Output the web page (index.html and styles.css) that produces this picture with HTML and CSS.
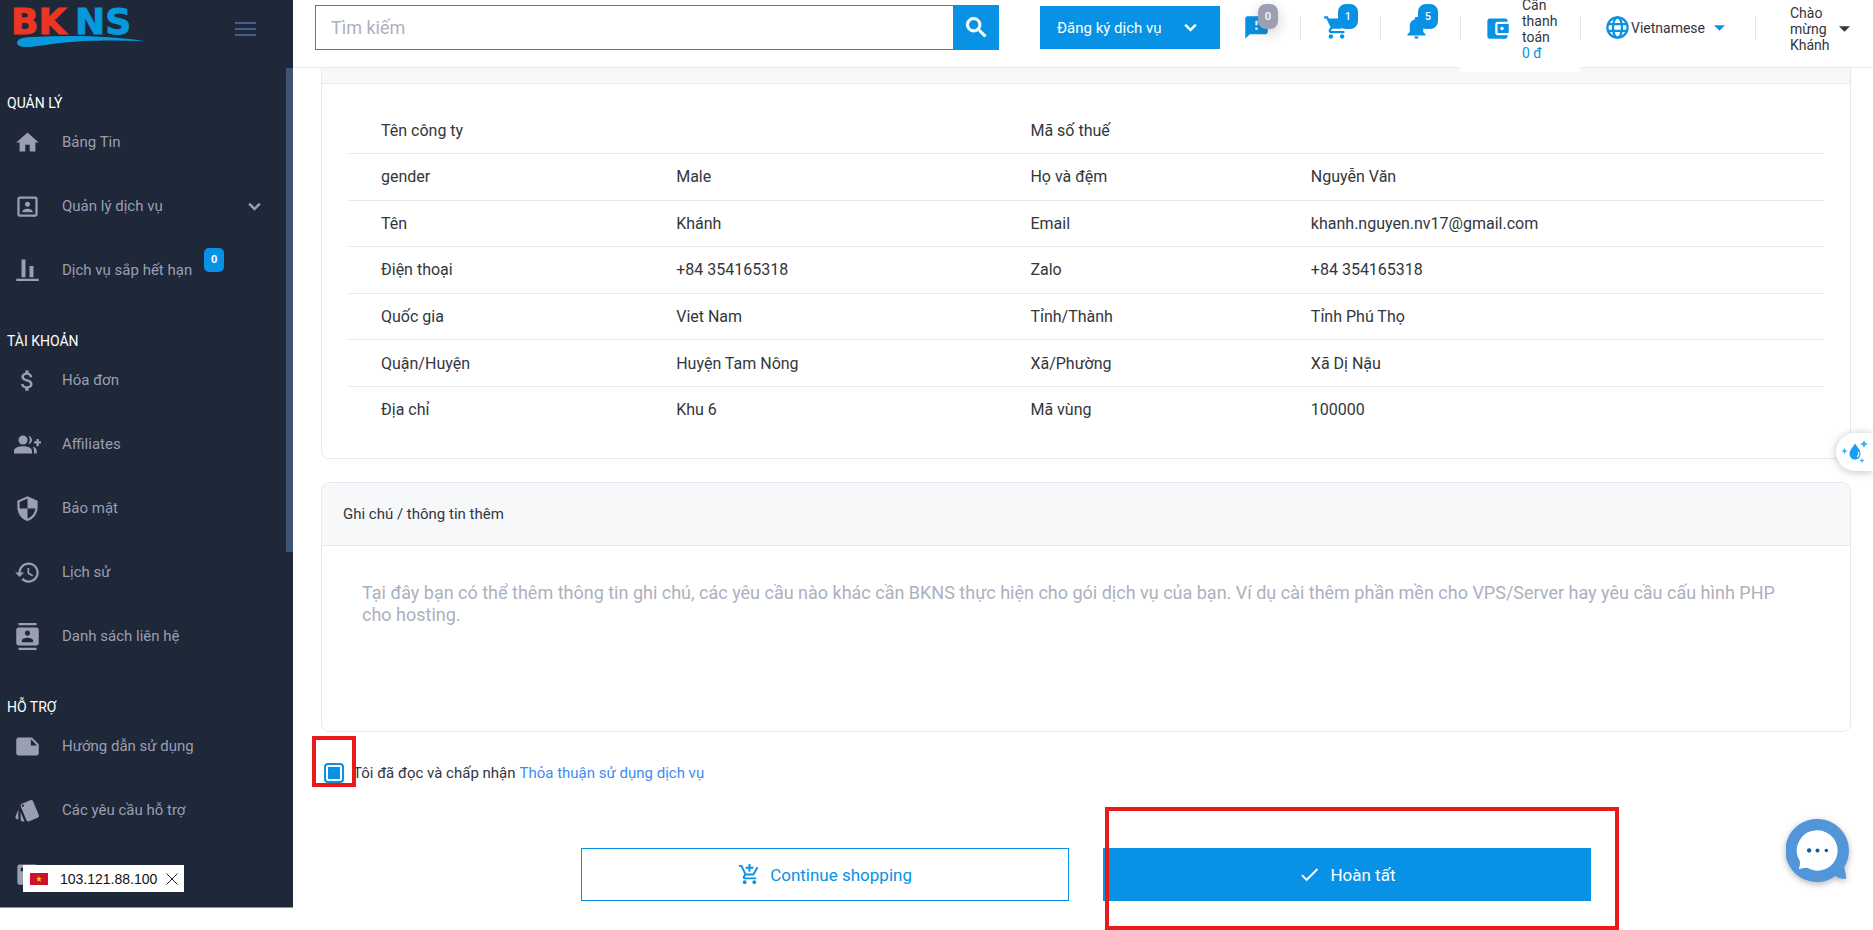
FILE: index.html
```html
<!DOCTYPE html>
<html lang="vi">
<head>
<meta charset="utf-8">
<title>BKNS</title>
<link rel="stylesheet" href="styles.css">
</head>
<body>
<svg class="sprite" aria-hidden="true">
  <symbol id="home" viewBox="0 0 24 24"><path d="M10 20v-6h4v6h5v-8h3L12 3 2 12h3v8z"/></symbol>
  <symbol id="portrait" viewBox="0 0 24 24"><path d="M12 12.25c1.24 0 2.25-1.01 2.25-2.25S13.24 7.75 12 7.75 9.75 8.76 9.75 10s1.01 2.25 2.25 2.25zm4.5 4c0-1.5-3-2.25-4.5-2.25s-4.5.75-4.5 2.25V17h9v-.75zM19 3H5c-1.1 0-2 .9-2 2v14c0 1.1.9 2 2 2h14c1.1 0 2-.9 2-2V5c0-1.1-.9-2-2-2zm0 16H5V5h14v14z"/></symbol>
  <symbol id="bars" viewBox="0 0 24 24"><path d="M2 19.400h20v2H2zM6.700 2.300h3.500V18H6.700zM13.800 8h3.500v10h-3.500z"/></symbol>
  <symbol id="money" viewBox="0 0 24 24"><path d="M11.8 10.9c-2.270-.59-3-1.200-3-2.150 0-1.090 1.010-1.850 2.700-1.850 1.780 0 2.440.85 2.500 2.100h2.210c-.07-1.720-1.120-3.300-3.210-3.810V3h-3v2.160c-1.940.42-3.500 1.680-3.500 3.610 0 2.310 1.910 3.460 4.700 4.130 2.500.6 3 1.480 3 2.410 0 .69-.49 1.790-2.700 1.790-2.060 0-2.870-.92-2.980-2.100h-2.200c.12 2.190 1.760 3.420 3.680 3.830V21h3v-2.150c1.950-.37 3.500-1.500 3.500-3.550 0-2.840-2.430-3.810-4.700-4.400z"/></symbol>
  <symbol id="people" viewBox="0 0 24 24"><circle cx="8" cy="8" r="4"/><path d="M0 20v-2.500c0-2.800 4.500-4 8-4s8 1.200 8 4V20zM12.700 4.200c1.600.2 3.300 1.700 3.300 3.800s-1.700 3.600-3.300 3.800c.8-1 1.300-2.300 1.300-3.800s-.5-2.800-1.300-3.800zM16.500 13.800c2 .7 3.700 1.900 3.700 3.700V20h-2.400v-2.500c0-1.500-.5-2.700-1.300-3.700zM20 7h2v2.200h2.300v2H22v2.300h-2v-2.300h-2.200v-2H20z"/></symbol>
  <symbol id="shield" viewBox="0 0 24 24"><path d="M12 1L3 5v6c0 5.550 3.840 10.740 9 12 5.160-1.260 9-6.450 9-12V5l-9-4zm0 10.990h7c-.53 4.120-3.280 7.790-7 8.940V12H5V6.300l7-3.110v8.800z"/></symbol>
  <symbol id="history" viewBox="0 0 24 24"><path d="M13 3c-4.970 0-9 4.030-9 9H1l3.890 3.890.07.14L9 12H6c0-3.870 3.130-7 7-7s7 3.130 7 7-3.130 7-7 7c-1.930 0-3.680-.79-4.940-2.060l-1.420 1.420C8.270 19.990 10.510 21 13 21c4.970 0 9-4.030 9-9s-4.030-9-9-9zm-1 5v5l4.280 2.540.72-1.210-3.500-2.080V8H12z"/></symbol>
  <symbol id="contacts" viewBox="0 0 24 24"><path d="M20 0H4v2h16V0zM4 24h16v-2H4v2zM20 4H4c-1.100 0-2 .9-2 2v12c0 1.100.9 2 2 2h16c1.100 0 2-.9 2-2V6c0-1.100-.9-2-2-2zm-8 2.750c1.240 0 2.250 1.010 2.250 2.250s-1.010 2.250-2.250 2.250S9.750 10.240 9.750 9 10.760 6.750 12 6.750zM17 17H7v-1.500c0-1.670 3.330-2.500 5-2.500s5 .83 5 2.500V17z"/></symbol>
  <symbol id="note" viewBox="0 0 24 24"><path d="M22 10l-6-6H4c-1.100 0-2 .9-2 2v12.010c0 1.100.9 1.990 2 1.990l16-.01c1.100 0 2-.89 2-1.990v-8zm-7-4.500l5.500 5.500H15V5.500z"/></symbol>
  <symbol id="tags" viewBox="0 0 24 24"><path d="M2.530 19.650l1.340.56v-9.030l-2.430 5.860c-.41 1.020.08 2.190 1.090 2.610zm19.500-3.700L17.070 3.980c-.31-.75-1.040-1.210-1.810-1.230-.26 0-.53.04-.79.15L7.100 5.950c-.75.31-1.210 1.030-1.230 1.800-.01.27.04.54.15.8l4.960 11.970c.31.76 1.050 1.220 1.830 1.230.26 0 .52-.05.77-.15l7.360-3.050c1.020-.42 1.510-1.590 1.090-2.600zM7.880 8.750c-.55 0-1-.45-1-1s.45-1 1-1 1 .45 1 1-.45 1-1 1zm-2 11c0 1.100.9 2 2 2h1.450l-3.450-8.340v6.340z"/></symbol>
  <symbol id="book" viewBox="0 0 24 24"><path d="M5 3h14a2 2 0 0 1 2 2v14a2 2 0 0 1-2 2H5a2 2 0 0 1-2-2V5a2 2 0 0 1 2-2zm1 3v3h12V6z"/></symbol>
  <symbol id="search" viewBox="0 0 24 24"><path stroke="currentColor" stroke-width=".8" d="M15.500 14h-.79l-.28-.27C15.410 12.590 16 11.110 16 9.500 16 5.910 13.090 3 9.500 3S3 5.910 3 9.500 5.910 16 9.500 16c1.610 0 3.090-.59 4.230-1.570l.27.28v.79l5 4.990L20.490 19l-4.990-5zm-6 0C7.010 14 5 11.990 5 9.500S7.010 5 9.500 5 14 7.010 14 9.500 11.990 14 9.500 14z"/></symbol>
  <symbol id="feedback" viewBox="0 0 24 24"><path d="M20 2H4c-1.100 0-1.990.9-1.990 2L2 22l4-4h14c1.100 0 2-.9 2-2V4c0-1.100-.9-2-2-2zm-7 12h-2v-2h2v2zm0-4h-2V6h2v4z"/></symbol>
  <symbol id="cart" viewBox="0 0 24 24"><path d="M7 18c-1.100 0-1.990.9-1.990 2S5.900 22 7 22s2-.9 2-2-.9-2-2-2zM1 2v2h2l3.600 7.590-1.350 2.450c-.16.28-.25.61-.25.96 0 1.100.9 2 2 2h12v-2H7.420c-.14 0-.25-.11-.25-.25l.03-.12.9-1.630h7.450c.75 0 1.410-.41 1.750-1.030l3.580-6.490A1.003 1.003 0 0 0 20 4H5.210l-.94-2H1zm16 16c-1.100 0-1.990.9-1.990 2s.89 2 1.990 2 2-.9 2-2-.9-2-2-2z"/></symbol>
  <symbol id="bell" viewBox="0 0 24 24"><path d="M12 22c1.100 0 2-.9 2-2h-4c0 1.100.89 2 2 2zm6-6v-5c0-3.070-1.640-5.640-4.500-6.320V4c0-.83-.67-1.500-1.500-1.500s-1.500.67-1.500 1.500v.68C7.630 5.360 6 7.920 6 11v5l-2 2v1h16v-1l-2-2z"/></symbol>
  <symbol id="wallet" viewBox="0 0 24 24"><path d="M21 18v1c0 1.100-.9 2-2 2H5c-1.110 0-2-.9-2-2V5c0-1.100.89-2 2-2h14c1.100 0 2 .9 2 2v1h-9c-1.110 0-2 .9-2 2v8c0 1.100.89 2 2 2h9zm-9-2h10V8H12v8zm4-2.500c-.83 0-1.500-.67-1.500-1.500s.67-1.500 1.500-1.500 1.500.67 1.500 1.500-.67 1.500-1.500 1.500z"/></symbol>
  <symbol id="globe" viewBox="0 0 24 24"><g fill="none" stroke="currentColor" stroke-width="2"><circle cx="12" cy="12" r="9"/><ellipse cx="12" cy="12" rx="4" ry="9"/><path d="M4 9h16M4 15h16"/></g></symbol>
  <symbol id="cartadd" viewBox="0 0 24 24"><path d="M11 9h2V6h3V4h-3V1h-2v3H8v2h3v3zm-4 9c-1.100 0-1.990.9-1.990 2S5.900 22 7 22s2-.9 2-2-.9-2-2-2zm10 0c-1.100 0-1.990.9-1.990 2s.89 2 1.990 2 2-.9 2-2-.9-2-2-2zm-9.830-3.250l.03-.12.9-1.630h7.450c.75 0 1.410-.41 1.750-1.030l3.860-7.010L19.420 4h-.01l-1.100 2-2.760 5H8.530l-.13-.27L6.160 6l-.95-2-.94-2H1v2h2l3.600 7.590-1.350 2.450c-.16.28-.25.61-.25.96 0 1.100.9 2 2 2h12v-2H7.420c-.13 0-.25-.11-.25-.25z"/></symbol>
  <symbol id="check" viewBox="0 0 24 24"><path d="M9 16.170L4.830 12l-1.420 1.410L9 19 21 7l-1.410-1.410z"/></symbol>
  <symbol id="down" viewBox="0 0 24 24"><path stroke="currentColor" stroke-width=".8" d="M16.590 8.590L12 13.170 7.410 8.590 6 10l6 6 6-6z"/></symbol>
  <symbol id="caret" viewBox="0 0 12 6"><path d="M0 0h12L6 6z"/></symbol>
</svg>

<div class="app">
  <aside class="sidebar">
    <div class="brand">
      <svg class="logo" viewBox="0 0 134 40" role="img" aria-label="BKNS">
        <text class="logo-text logo-red" x="-2" y="27">BK</text>
        <text class="logo-text logo-blue" x="62" y="27">NS</text>
        <path class="logo-blue" d="M4 36c0-4 6-6 16-6 40-2 80-1 111 4-30-1-60-1-84 2-16 2-26 4-34 4-6 0-9-2-9-4z"/>
      </svg>
      <button class="menu-toggle" aria-label="Menu"><span></span><span></span><span></span></button>
    </div>
    <nav class="nav">
      <h2 class="nav-title">QUẢN LÝ</h2>
      <a class="nav-item" href="#"><svg class="icon"><use href="#home"/></svg><span>Bảng Tin</span></a>
      <a class="nav-item" href="#"><svg class="icon"><use href="#portrait"/></svg><span>Quản lý dịch vụ</span><svg class="icon-small nav-arrow"><use href="#down"/></svg></a>
      <a class="nav-item" href="#"><svg class="icon"><use href="#bars"/></svg><span>Dịch vụ sắp hết hạn</span><span class="nav-badge">0</span></a>
      <h2 class="nav-title">TÀI KHOẢN</h2>
      <a class="nav-item" href="#"><svg class="icon"><use href="#money"/></svg><span>Hóa đơn</span></a>
      <a class="nav-item" href="#"><svg class="icon"><use href="#people"/></svg><span>Affiliates</span></a>
      <a class="nav-item" href="#"><svg class="icon"><use href="#shield"/></svg><span>Bảo mật</span></a>
      <a class="nav-item" href="#"><svg class="icon"><use href="#history"/></svg><span>Lịch sử</span></a>
      <a class="nav-item" href="#"><svg class="icon"><use href="#contacts"/></svg><span>Danh sách liên hệ</span></a>
      <h2 class="nav-title">HỖ TRỢ</h2>
      <a class="nav-item" href="#"><svg class="icon"><use href="#note"/></svg><span>Hướng dẫn sử dụng</span></a>
      <a class="nav-item" href="#"><svg class="icon"><use href="#tags"/></svg><span>Các yêu cầu hỗ trợ</span></a>
      <a class="nav-item" href="#" aria-label="Thư viện"><svg class="icon"><use href="#book"/></svg></a>
    </nav>
    <div class="scroll-thumb"></div>
    <div class="ip-box">
      <svg class="flag" viewBox="0 0 18 12"><path fill="#d0112b" d="M0 0h18v12H0z"/><path fill="#ffde00" d="M9 3l.8 2.200h2.300l-1.900 1.400.7 2.200L9 7.400 7.100 8.800l.7-2.200-1.900-1.400h2.300z"/></svg>
      <span>103.121.88.100</span>
      <button class="ip-close" aria-label="Đóng"><svg viewBox="0 0 12 12"><path d="M.5.5l11 11M11.500.5l-11 11" stroke="#222" fill="none"/></svg></button>
    </div>
  </aside>

  <div class="page">
    <header class="topbar">
      <form class="search">
        <input class="search-input" type="text" placeholder="Tìm kiếm" aria-label="Tìm kiếm">
        <button class="search-button" type="button" aria-label="Tìm"><svg class="icon"><use href="#search"/></svg></button>
      </form>
      <button class="register">Đăng ký dịch vụ <svg class="icon-small"><use href="#down"/></svg></button>
      <div class="tools">
        <a class="tool" href="#" aria-label="Phản hồi"><svg class="icon"><use href="#feedback"/></svg><span class="badge badge-grey">0</span></a>
        <a class="tool" href="#" aria-label="Giỏ hàng"><svg class="icon"><use href="#cart"/></svg><span class="badge">1</span></a>
        <a class="tool" href="#" aria-label="Thông báo"><svg class="icon"><use href="#bell"/></svg><span class="badge">5</span></a>
        <a class="tool wallet" href="#"><svg class="icon"><use href="#wallet"/></svg><span class="wallet-text">Cần thanh toán <span class="amount">0 đ</span></span></a>
        <button class="tool language"><svg class="icon"><use href="#globe"/></svg>Vietnamese<svg class="caret caret-blue"><use href="#caret"/></svg></button>
        <button class="tool user"><span class="user-text">Chào mừng Khánh</span><svg class="caret"><use href="#caret"/></svg></button>
      </div>
    </header>

    <main class="content">
      <section class="card card-info">
        <div class="card-strip"></div>
        <div class="info-body">
          <table class="info">
            <colgroup><col class="col-a"><col class="col-b"><col class="col-c"><col class="col-d"></colgroup>
            <tbody>
            <tr><td>Tên công ty</td><td></td><td>Mã số thuế</td><td></td></tr>
            <tr><td>gender</td><td>Male</td><td>Họ và đệm</td><td>Nguyễn Văn</td></tr>
            <tr><td>Tên</td><td>Khánh</td><td>Email</td><td>khanh.nguyen.nv17@gmail.com</td></tr>
            <tr><td>Điện thoại</td><td>+84 354165318</td><td>Zalo</td><td>+84 354165318</td></tr>
            <tr><td>Quốc gia</td><td>Viet Nam</td><td>Tỉnh/Thành</td><td>Tỉnh Phú Thọ</td></tr>
            <tr><td>Quận/Huyện</td><td>Huyện Tam Nông</td><td>Xã/Phường</td><td>Xã Dị Nậu</td></tr>
            <tr><td>Địa chỉ</td><td>Khu 6</td><td>Mã vùng</td><td>100000</td></tr>
            </tbody>
          </table>
        </div>
      </section>

      <section class="card">
        <label class="card-title" for="note-text">Ghi chú / thông tin thêm</label>
        <textarea class="note-input" id="note-text" placeholder="Tại đây bạn có thể thêm thông tin ghi chú, các yêu cầu nào khác cần BKNS thực hiện cho gói dịch vụ của bạn. Ví dụ cài thêm phần mền cho VPS/Server hay yêu cầu cấu hình PHP cho hosting."></textarea>
      </section>

      <div class="terms">
        <input class="terms-check" type="checkbox" id="accept" checked>
        <label for="accept">Tôi đã đọc và chấp nhận</label>
        <a class="terms-link" href="#">Thỏa thuận sử dụng dịch vụ</a>
        <span class="mark mark-check"></span>
      </div>

      <div class="actions">
        <button class="action action-line"><svg class="icon-small"><use href="#cartadd"/></svg>Continue shopping</button>
        <div class="action-wrap">
          <button class="action action-fill"><svg class="icon-small"><use href="#check"/></svg>Hoàn tất</button>
          <span class="mark mark-action"></span>
        </div>
      </div>
    </main>
  </div>
</div>

<button class="assistant" aria-label="Trợ lý">
  <svg viewBox="0 0 28 24"><path fill="#16a0f5" d="M14 3.500c2.500 3.700 5.500 6.500 5.500 10.300a5.500 6 0 0 1-11 0C8.500 10 11.800 7.500 14 3.500z"/><path fill="none" stroke="#fff" stroke-width="1.300" stroke-linecap="round" d="M17.500 12.500c.5 1.800 0 3.200-1 4"/><path fill="#32b1f5" d="M3.500 8l.9 2.100 2.100.9-2.100.9-.9 2.100-.9-2.100-2.100-.9 2.100-.9zM23 0l1.200 2.800L27 4l-2.800 1.200L23 8l-1.200-2.800L19 4l2.800-1.200zM21 18l.7 1.800 1.800.7-1.800.7L21 23l-.7-1.800-1.800-.7 1.800-.7z"/></svg>
</button>
<button class="chat" aria-label="Trò chuyện">
  <svg viewBox="0 0 64 64"><path fill="#5096d8" d="M32 0a32 32 0 0 1 27 49c1 3 2 8 2 12-4 0-8-1-11-3A32 32 0 1 1 32 0z"/><path fill="#fff" d="M32 11.500a20.500 20.500 0 1 1-10 38.400c-3-1-6 1-9 .8 1-3 1.500-5 1-8A20.500 20.500 0 0 1 32 11.500z"/><g fill="#125a9c"><circle cx="23.500" cy="32" r="2.200"/><circle cx="32" cy="32" r="2"/><circle cx="41" cy="32" r="1.800"/></g></svg>
</button>
</body>
</html>
```
FILE: styles.css
```css
* { box-sizing: border-box; }

body {
  margin: 0;
  background: #fff;
  color: #33363c;
  font-family: Roboto, "Noto Sans", sans-serif;
  font-size: 15px;
}

button, input, textarea { font: inherit; margin: 0; }
button { border: 0; background: none; padding: 0; color: inherit; cursor: pointer; }
a { color: inherit; text-decoration: none; }
svg { display: block; fill: currentColor; }

.sprite { position: absolute; width: 0; height: 0; }
.icon { width: 27px; height: 27px; flex: none; }
.icon-small { width: 23px; height: 23px; flex: none; }

.app { display: flex; height: 100vh; overflow: hidden; }

.sidebar {
  position: relative;
  flex: none;
  width: 293px;
  height: calc(100vh - 22px);
  overflow: hidden;
  background: #1e2838;
  border-bottom: 1px solid #8a94a3;
  color: #9a9fb4;
}
.brand {
  display: flex;
  align-items: flex-start;
  justify-content: space-between;
  height: 64px;
  padding: 7px 37px 0 13px;
}
.logo { width: 134px; height: 40px; overflow: visible; }
.logo-text { font: bold 36px "DejaVu Sans", sans-serif; }
.logo-red { fill: #ee3524; }
.logo-blue { fill: #0898dc; }
.logo-text.logo-red { stroke: #ee3524; }
.logo-text.logo-blue { stroke: #0898dc; }
.menu-toggle { display: grid; gap: 4px; width: 21px; margin-top: 15px; }
.menu-toggle span { height: 2px; background: #465f8c; }

.nav-title {
  margin: 32px 0 0;
  padding-left: 7px;
  color: #fff;
  font-size: 14px;
  line-height: 14px;
  font-weight: 400;
}
.nav-item {
  display: flex;
  align-items: center;
  gap: 21px;
  height: 64px;
  padding: 0 27px 0 14px;
}
.nav-arrow { margin-left: auto; }
.nav-badge {
  align-self: flex-start;
  width: 20px;
  margin: 10px 0 0 -9px;
  border-radius: 5px;
  background: #0892e5;
  color: #fff;
  font-size: 11px;
  font-weight: 700;
  line-height: 24px;
  text-align: center;
}
.scroll-thumb {
  position: absolute;
  top: 68px;
  right: 0;
  width: 7px;
  height: 484px;
  background: #3f5373;
}
.ip-box {
  position: absolute;
  left: 23px;
  bottom: 15px;
  display: flex;
  align-items: center;
  gap: 9px;
  height: 27px;
  padding: 0 6px 0 7px;
  background: #fff;
  color: #111;
  font: 14px "Liberation Sans", sans-serif;
}
.flag { width: 18px; height: 12px; margin-right: 3px; }
.ip-close { width: 12px; height: 12px; }

.page { flex: 1; min-width: 0; }

.topbar {
  display: flex;
  height: 68px;
  padding: 5px 0 0 22px;
  border-bottom: 1px solid #e8eaed;
}
.search { display: flex; flex: 1; height: 45px; min-width: 0; }
.search-input {
  flex: 1;
  min-width: 0;
  padding: 0 15px;
  border: 1px solid #0892e5;
  border-right: 0;
  font-size: 18px;
  color: #33363c;
}
.search-input::placeholder, .note-input::placeholder { color: #adb0c0; opacity: 1; }
.search-button {
  display: grid;
  place-items: center;
  width: 46px;
  background: #0892e5;
  color: #fff;
}
.register {
  display: flex;
  align-items: center;
  justify-content: space-between;
  width: 180px;
  height: 43px;
  margin: 1px 0 0 41px;
  padding: 0 18px 0 17px;
  background: #0892e5;
  color: #fff;
}
.tools { display: flex; height: 67px; margin-top: -5px; font-size: 14px; line-height: 16px; }
.tool {
  position: relative;
  display: flex;
  align-items: center;
  width: 80px;
  height: 55px;
  padding-left: 23px;
}
.tool .icon { color: #0892e5; }
.tool + .tool::before {
  content: "";
  position: absolute;
  left: 0;
  top: 17px;
  width: 1px;
  height: 22px;
  background: #e4e5ea;
}
.badge {
  position: absolute;
  left: 38px;
  top: 4px;
  width: 20px;
  border-radius: 8px;
  background: #0892e5;
  color: #fff;
  font-size: 11px;
  font-weight: 500;
  line-height: 25px;
  text-align: center;
}
.badge-grey { background: #9a9fb4; box-shadow: 0 4px 14px rgba(0, 0, 0, .2); }
.wallet { width: 120px; height: 72px; padding: 0 16px 16px 24px; gap: 11px; background: #fff; }
.wallet-text { flex: 1; align-self: flex-start; margin-top: -3px; }
.amount { display: block; color: #0892e5; }
.language { width: 175px; padding: 0 0 0 24px; }
.language .caret { margin-left: 9px; }
.caret { width: 11px; height: 6px; flex: none; }
.caret-blue { color: #0892e5; }
.user { width: 118px; height: 58px; padding: 0 23px 0 35px; justify-content: space-between; text-align: left; }
.user-text { width: 40px; }

.content { padding: 0 22px 0 28px; }
.card {
  border: 1px solid #e8e9ee;
  border-radius: 8px;
  overflow: hidden;
}
.card-info { border-top: 0; border-radius: 0 0 8px 8px; }
.card-strip { height: 16px; background: #f7f8fa; border-bottom: 1px solid #e8e9ee; }
.info-body { padding: 24px 26px 26px; }
.info {
  width: 100%;
  height: 324px;
  border-collapse: collapse;
  table-layout: fixed;
  font-size: 16px;
}
.info td { padding: 0 0 0 33px; }
.info tr + tr td { border-top: 1px solid #e8e9ee; }
.col-a { width: 20%; }
.col-b { width: 24%; }
.col-c { width: 19%; }
.col-d { width: 37%; }

.card + .card { margin-top: 23px; }
.card-title {
  display: block;
  padding: 20px 21px;
  background: #f7f8fa;
  border-bottom: 1px solid #e8e9ee;
  line-height: 22px;
}
.note-input {
  display: block;
  width: 100%;
  height: 185px;
  padding: 36px 60px 36px 40px;
  border: 0;
  resize: none;
  font-size: 18px;
  line-height: 22px;
}

.terms {
  position: relative;
  display: flex;
  align-items: center;
  gap: 4px;
  margin-top: 29px;
  padding-left: 3px;
  line-height: 24px;
}
.terms-check {
  appearance: none;
  width: 20px;
  height: 20px;
  margin-right: 5px;
  padding: 2px;
  border: 2px solid #0892e5;
  border-radius: 4px;
  background: #0892e5 content-box;
}
.terms-link { color: #3d8bf2; }
.mark { position: absolute; border: 4px solid #e81b1b; pointer-events: none; }
.mark-check { left: -9px; top: -25px; width: 44px; height: 51px; }
.mark-action { inset: -41px -28px -29px 2px; }

.actions {
  display: grid;
  grid-template-columns: 1fr 1fr;
  gap: 34px;
  width: 66%;
  margin: 63px auto 0;
}
.action-wrap { position: relative; }
.action {
  display: flex;
  align-items: center;
  justify-content: center;
  gap: 9px;
  width: 100%;
  height: 53px;
  font-size: 17px;
}
.action-line { border: 1px solid #0892e5; color: #0892e5; }
.action-fill { background: #0892e5; color: #fff; }

.assistant {
  position: fixed;
  right: 0;
  top: 433px;
  width: 37px;
  height: 38px;
  padding-left: 5px;
  border-radius: 19px 0 0 19px;
  background: #fff;
  box-shadow: 0 1px 8px rgba(0, 0, 0, .25);
}
.assistant svg { width: 28px; height: 24px; }
.chat {
  position: fixed;
  right: 24px;
  bottom: 48px;
  width: 63px;
  height: 63px;
}
.chat svg { width: 63px; height: 63px; filter: drop-shadow(0 2px 3px rgba(0, 0, 0, .3)); }
```
